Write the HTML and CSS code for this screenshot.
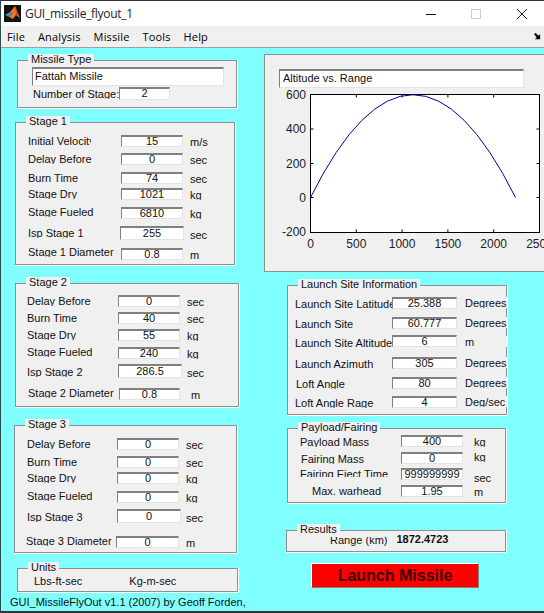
FILE: index.html
```html
<!DOCTYPE html>
<html lang="en">

<head>
  <meta charset="UTF-8" />
  <link rel="stylesheet" href="styles.css">
  <title>GUI_missile_flyout_1</title>
</head>

<body>
  <div class="window">

    <div class="titlebar">
      <svg class="logo" width="17" height="17" viewBox="0 0 17 17">
        <rect width="17" height="17" fill="#111" />
        <polygon points="1,10 6,7 8,9 5,12" fill="#3f8fc4" />
        <polygon points="6,7 11,1 13,6 16,13 12,10 9,14 5,12 8,9" fill="#e8772a" />
        <polygon points="11,1 13,6 16,13 12,10" fill="#c8501a" />
      </svg>
      <span class="title-text">GUI_missile_flyout_1</span>
      <div class="controls">
        <svg width="101" height="12" viewBox="0 0 101 12">
          <line x1="0" y1="6.5" x2="10" y2="6.5" stroke="#111" />
          <rect x="45.5" y="1.5" width="9" height="9" fill="none" stroke="#ccc" />
          <path d="M91 1 L101 11 M101 1 L91 11" stroke="#222" fill="none" />
        </svg>
      </div>
    </div>

    <div class="menubar">
      <span>File</span>
      <span>Analysis</span>
      <span>Missile</span>
      <span>Tools</span>
      <span>Help</span>
      <svg class="dock" width="7" height="7" viewBox="0 0 8 8">
        <path d="M0 1 L2 0 L5 3 L7 1 L7 7 L1 7 L3 5 Z" fill="#000" />
      </svg>
    </div>

    <div class="content">

      <div class="left">
        <fieldset class="panel missile">
          <legend>Missile Type</legend>
          <div class="field name-box">Fattah Missile</div>
          <div class="stage-count">
            <div class="label">Number of Stage:</div>
            <div class="field count">2</div>
          </div>
        </fieldset>

        <fieldset class="panel stage-1">
          <legend>Stage 1</legend>
          <div class="rows">
            <div class="label velocity">Initial Velocity</div><div class="field">15</div><div class="unit">m/s</div>
            <div class="label">Delay Before</div><div class="field">0</div><div class="unit">sec</div>
            <div class="label">Burn Time</div><div class="field">74</div><div class="unit">sec</div>
            <div class="label">Stage Dry</div><div class="field">1021</div><div class="unit">kg</div>
            <div class="label up1">Stage Fueled</div><div class="field">6810</div><div class="unit">kg</div>
            <div class="label dn1">Isp Stage 1</div><div class="field big shift-l">255</div><div class="unit isp-unit">sec</div>
            <div class="label up2">Stage 1 Diameter</div><div class="field">0.8</div><div class="unit">m</div>
          </div>
        </fieldset>

        <fieldset class="panel stage-2">
          <legend>Stage 2</legend>
          <div class="rows">
            <div class="label">Delay Before</div><div class="field">0</div><div class="unit">sec</div>
            <div class="label">Burn Time</div><div class="field">40</div><div class="unit">sec</div>
            <div class="label">Stage Dry</div><div class="field">55</div><div class="unit">kg</div>
            <div class="label up1">Stage Fueled</div><div class="field">240</div><div class="unit">kg</div>
            <div class="label dn2">Isp Stage 2</div><div class="field big">286.5</div><div class="unit isp-unit">sec</div>
            <div class="label up1 shift-r">Stage 2 Diameter</div><div class="field shift-r">0.8</div><div class="unit shift-m">m</div>
          </div>
        </fieldset>

        <fieldset class="panel stage-3">
          <legend>Stage 3</legend>
          <div class="rows">
            <div class="label">Delay Before</div><div class="field">0</div><div class="unit">sec</div>
            <div class="label">Burn Time</div><div class="field">0</div><div class="unit">sec</div>
            <div class="label">Stage Dry</div><div class="field">0</div><div class="unit">kg</div>
            <div class="label up1">Stage Fueled</div><div class="field">0</div><div class="unit">kg</div>
            <div class="label dn2">Isp Stage 3</div><div class="field big">0</div><div class="unit isp-unit">sec</div>
            <div class="label up1 shift-l">Stage 3 Diameter</div><div class="field shift-l">0</div><div class="unit">m</div>
          </div>
        </fieldset>

        <fieldset class="panel units">
          <legend>Units</legend>
          <div class="unit-options">
            <span>Lbs-ft-sec</span>
            <span>Kg-m-sec</span>
          </div>
        </fieldset>

        <div class="credit">GUI_MissileFlyOut v1.1 (2007) by Geoff Forden,</div>
      </div>

      <div class="right">
        <div class="plot-panel">
          <div class="field plot-title">Altitude vs. Range</div>
          <svg class="plot" width="279" height="175" viewBox="0 0 279 175">
            <rect x="45.5" y="4.5" width="229" height="138" fill="#fff" stroke="#000" />
            <path d="M91.3 142.5v-3M137.1 142.5v-3M182.9 142.5v-3M228.7 142.5v-3M91.3 4.5v3M137.1 4.5v3M182.9 4.5v3M228.7 4.5v3" stroke="#000" />
            <path d="M45.5 39h3M45.5 73.5h3M45.5 107.5h3M274.5 39h-3M274.5 73.5h-3M274.5 107.5h-3" stroke="#000" />
            <path d="M45.5 107.5 Q148 -98 250.5 107.5" fill="none" stroke="#00009c" />
            <g class="ticks" text-anchor="end">
              <text x="41" y="8.5">600</text>
              <text x="41" y="43">400</text>
              <text x="41" y="78">200</text>
              <text x="41" y="112">0</text>
              <text x="41" y="146">-200</text>
            </g>
            <g class="ticks" text-anchor="middle">
              <text x="45.5" y="157.5">0</text>
              <text x="91.3" y="157.5">500</text>
              <text x="137.1" y="157.5">1000</text>
              <text x="182.9" y="157.5">1500</text>
              <text x="228.7" y="157.5">2000</text>
              <text x="274.5" y="157.5">2500</text>
            </g>
          </svg>
        </div>

        <fieldset class="panel site">
          <legend>Launch Site Information</legend>
          <div class="rows">
            <div class="label dn1">Launch Site Latitude</div><div class="field">25.388</div><div class="unit">Degrees</div>
            <div class="label dn1">Launch Site</div><div class="field">60.777</div><div class="unit">Degrees</div>
            <div class="label dn2">Launch Site Altitude</div><div class="field">6</div><div class="unit dn1">m</div>
            <div class="label dn1">Launch Azimuth</div><div class="field">305</div><div class="unit">Degrees</div>
            <div class="label dn1 shift-r">Loft Angle</div><div class="field">80</div><div class="unit">Degrees</div>
            <div class="label dn1">Loft Angle Rage</div><div class="field">4</div><div class="unit">Deg/sec</div>
          </div>
        </fieldset>

        <fieldset class="panel payload">
          <legend>Payload/Fairing</legend>
          <div class="rows">
            <div class="label dn1">Payload Mass</div><div class="field">400</div><div class="unit dn1">kg</div>
            <div class="label dn1 shift-r">Fairing Mass</div><div class="field">0</div><div class="unit up1">kg</div>
            <div class="label short">Fairing Eject Time</div><div class="field">999999999</div><div class="unit dn4">sec</div>
            <div class="label warhead">Max. warhead</div><div class="field">1.95</div><div class="unit dn1">m</div>
          </div>
        </fieldset>

        <fieldset class="panel results">
          <legend>Results</legend>
          <div class="result-row">
            <div class="range-label">Range (km)</div>
            <div class="range-value">1872.4723</div>
          </div>
        </fieldset>

        <div class="launch">Launch Missile</div>
      </div>

    </div>
  </div>
</body>

</html>
```

FILE: styles.css
```css
* {
  box-sizing: border-box;
}

body {
  margin: 0;
  font-family: "Liberation Sans", Arial, sans-serif;
  font-size: 11px;
  color: #111;
}

.window {
  width: 544px;
  height: 613px;
  display: flex;
  flex-direction: column;
  overflow: hidden;
  background-color: #80ffff;
  border-top: 1px solid #333;
  border-left: 1px solid #2b4f4f;
  border-bottom: 2px solid #333;
}

/* title bar */
.titlebar {
  height: 25px;
  flex: none;
  display: flex;
  align-items: center;
  background-color: #fff;
  padding-left: 3px;
}

.logo {
  margin-right: 4px;
}

.title-text {
  font-family: "Open Sans", sans-serif;
  font-size: 12px;
  letter-spacing: -0.3px;
  color: #222;
}

.controls {
  margin-left: auto;
  margin-right: 17px;
  display: flex;
}

/* menu */
.menubar {
  height: 22px;
  flex: none;
  display: flex;
  align-items: center;
  padding-left: 6px;
  gap: 13px;
  background-color: #f0f0f0;
  border-bottom: 1px solid #a0a0a0;
  font-family: "Open Sans", sans-serif;
  font-size: 11px;
  letter-spacing: 0.15px;
  color: #000;
}

.dock {
  margin-left: auto;
  margin-right: 3px;
}

.content {
  display: flex;
  flex: 1;
}

.left {
  width: 263px;
  flex: none;
}

.right {
  width: 280px;
  flex: none;
}

/* panels */
.panel {
  display: block;
  min-width: 0;
  margin: 0;
  padding: 0;
  background-color: #f0f0f0;
  border: 1px solid #8c9090;
  box-shadow: 0 1px 0 #fff, 1px 0 0 #fff;
}

.panel legend {
  height: 13px;
  line-height: 11px;
  margin-left: 10px;
  padding: 0 3px;
  background-color: #f0f0f0;
}

.rows {
  display: grid;
  align-items: start;
}

.label {
  height: 11px;
  line-height: 12px;
  white-space: nowrap;
  overflow: hidden;
}

.field {
  height: 12px;
  line-height: 8px;
  background-color: #fff;
  border-top: 2px solid #808080;
  border-left: 1px solid #808080;
  border-right: 1px solid #e3e3e3;
  border-bottom: 1px solid #e3e3e3;
  text-align: center;
  overflow: hidden;
}

.field.big {
  width: 64px;
  height: 14px;
  line-height: 11px;
}

.unit {
  margin-top: 1px;
  padding-left: 7px;
  height: 11px;
  line-height: 12px;
  white-space: nowrap;
  overflow: hidden;
}

.unit.isp-unit {
  margin-top: 3px;
}

.up1 { margin-top: -1px; }
.up2 { margin-top: -2px; }
.dn1 { margin-top: 1px; }
.dn2 { margin-top: 2px; }
.dn4 { margin-top: 4px; }
.shift-l { margin-left: -1px; }
.shift-r { margin-left: 1px; }
.shift-m { margin-left: 4px; }
.velocity { width: 63px; }

/* left column */
.missile {
  margin: 6px 0 0 16px;
  width: 220px;
  height: 54px;
}

.name-box {
  width: 192px;
  height: 19px;
  line-height: 15px;
  margin-left: 14px;
  padding-left: 2px;
  text-align: left;
}

.stage-count {
  display: flex;
  align-items: center;
  margin-left: 15px;
  margin-top: 1px;
}

.stage-count .label {
  width: 86px;
}

.count {
  width: 51px;
  height: 13px;
}

.stage-1 {
  margin: 8px 0 0 14px;
  width: 220px;
  padding: 6px 0 4px;
}

.stage-1 .rows {
  padding-left: 12px;
  grid-template-columns: 93px 62px auto;
  grid-template-rows: 18px 19px 16px 19px 19px 22px 12px;
}

.stage-2 {
  margin: 12px 0 0 14px;
  width: 224px;
  padding: 5px 0 6px;
}

.stage-2 .rows {
  padding-left: 11px;
  grid-template-columns: 91px 62px auto;
  grid-template-rows: 17px 17px 18px 17px 24px 12px;
}

.stage-3 {
  margin: 12px 0 0 13px;
  width: 223px;
  padding: 6px 0 4px;
}

.stage-3 .rows {
  padding-left: 12px;
  grid-template-columns: 90px 62px auto;
  grid-template-rows: 18px 16px 19px 18px 27px 12px;
}

.units {
  margin: 9px 0 0 16px;
  width: 221px;
  height: 30px;
}

.unit-options {
  display: flex;
  padding-left: 16px;
  gap: 47px;
}

.credit {
  margin: 4px 0 0 9px;
  white-space: nowrap;
}

/* right column */
.plot-panel {
  margin-top: 6px;
  height: 218px;
  background-color: #f0f0f0;
  border: 1px solid #8c9090;
  border-right: 0;
}

.plot-title {
  width: 245px;
  height: 19px;
  line-height: 15px;
  margin: 14px 0 0 14px;
  padding-left: 3px;
  text-align: left;
}

.plot {
  display: block;
  margin-top: 2px;
}

.ticks {
  font-size: 12px;
  fill: #222;
}

.site {
  margin: 7px 0 0 23px;
  width: 220px;
  padding: 5px 0 6px;
}

.site .rows {
  padding-left: 7px;
  grid-template-columns: 97px 65px 50px;
  grid-template-rows: 20px 18px 22px 20px 19px 12px;
}

/* the unit labels sit over the panel's right border */
.site .unit {
  margin-top: 0;
  padding-left: 8px;
  background-color: #f0f0f0;
}

.site .unit.dn1 {
  margin-top: 1px;
}

.payload {
  margin: 7px 0 0 23px;
  width: 219px;
  padding: 0 0 5px;
}

.payload .rows {
  padding-left: 12px;
  grid-template-columns: 101px 62px auto;
  grid-template-rows: 17px 16px 17px 12px;
}

.payload .unit {
  padding-left: 11px;
}

.short {
  height: 9px;
}

.warhead {
  margin-left: 12px;
}

.results {
  margin: 21px 0 0 22px;
  width: 220px;
  height: 28px;
}

.result-row {
  display: flex;
  padding-left: 43px;
  gap: 9px;
}

.range-label {
  height: 12px;
  line-height: 6px;
  overflow: hidden;
}

.range-value {
  line-height: 5px;
  font-weight: bold;
}

.launch {
  margin: 11px 0 0 47px;
  width: 168px;
  height: 25px;
  line-height: 23px;
  background-color: #f00;
  border: 1px solid;
  border-color: #fff #808080 #808080 #fff;
  color: #3a0000;
  font-size: 16px;
  font-weight: bold;
  text-align: center;
}
```
